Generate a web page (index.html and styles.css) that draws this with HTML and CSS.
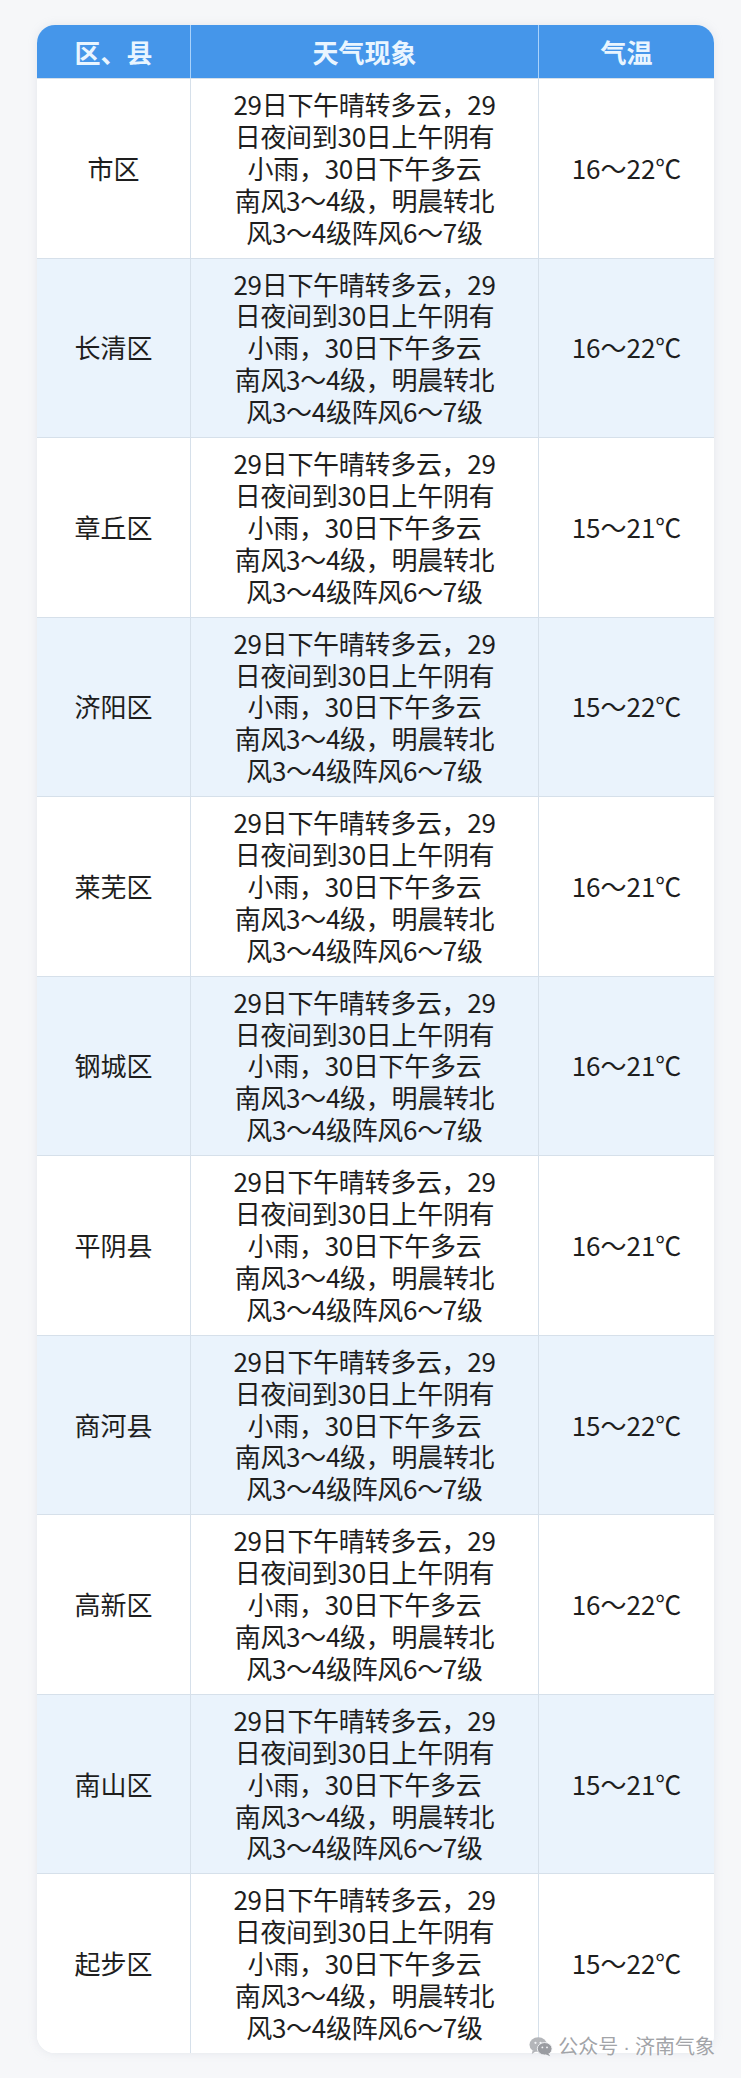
FILE: index.html
```html
<!DOCTYPE html>
<html lang="zh">
<head>
<meta charset="utf-8">
<link rel="stylesheet" href="styles.css">
</head>
<body>
<div class="page">
  <div class="card">
    <div class="row head">
      <div class="cell">区、县</div>
      <div class="cell">天气现象</div>
      <div class="cell">气温</div>
    </div>
    <div class="row">
      <div class="cell">市区</div>
      <div class="cell desc">29日下午晴转多云，29<br>日夜间到30日上午阴有<br>小雨，30日下午多云<br>南风3～4级，明晨转北<br>风3～4级阵风6～7级</div>
      <div class="cell">16～22℃</div>
    </div>
    <div class="row alt">
      <div class="cell">长清区</div>
      <div class="cell desc">29日下午晴转多云，29<br>日夜间到30日上午阴有<br>小雨，30日下午多云<br>南风3～4级，明晨转北<br>风3～4级阵风6～7级</div>
      <div class="cell">16～22℃</div>
    </div>
    <div class="row">
      <div class="cell">章丘区</div>
      <div class="cell desc">29日下午晴转多云，29<br>日夜间到30日上午阴有<br>小雨，30日下午多云<br>南风3～4级，明晨转北<br>风3～4级阵风6～7级</div>
      <div class="cell">15～21℃</div>
    </div>
    <div class="row alt">
      <div class="cell">济阳区</div>
      <div class="cell desc">29日下午晴转多云，29<br>日夜间到30日上午阴有<br>小雨，30日下午多云<br>南风3～4级，明晨转北<br>风3～4级阵风6～7级</div>
      <div class="cell">15～22℃</div>
    </div>
    <div class="row">
      <div class="cell">莱芜区</div>
      <div class="cell desc">29日下午晴转多云，29<br>日夜间到30日上午阴有<br>小雨，30日下午多云<br>南风3～4级，明晨转北<br>风3～4级阵风6～7级</div>
      <div class="cell">16～21℃</div>
    </div>
    <div class="row alt">
      <div class="cell">钢城区</div>
      <div class="cell desc">29日下午晴转多云，29<br>日夜间到30日上午阴有<br>小雨，30日下午多云<br>南风3～4级，明晨转北<br>风3～4级阵风6～7级</div>
      <div class="cell">16～21℃</div>
    </div>
    <div class="row">
      <div class="cell">平阴县</div>
      <div class="cell desc">29日下午晴转多云，29<br>日夜间到30日上午阴有<br>小雨，30日下午多云<br>南风3～4级，明晨转北<br>风3～4级阵风6～7级</div>
      <div class="cell">16～21℃</div>
    </div>
    <div class="row alt">
      <div class="cell">商河县</div>
      <div class="cell desc">29日下午晴转多云，29<br>日夜间到30日上午阴有<br>小雨，30日下午多云<br>南风3～4级，明晨转北<br>风3～4级阵风6～7级</div>
      <div class="cell">15～22℃</div>
    </div>
    <div class="row">
      <div class="cell">高新区</div>
      <div class="cell desc">29日下午晴转多云，29<br>日夜间到30日上午阴有<br>小雨，30日下午多云<br>南风3～4级，明晨转北<br>风3～4级阵风6～7级</div>
      <div class="cell">16～22℃</div>
    </div>
    <div class="row alt">
      <div class="cell">南山区</div>
      <div class="cell desc">29日下午晴转多云，29<br>日夜间到30日上午阴有<br>小雨，30日下午多云<br>南风3～4级，明晨转北<br>风3～4级阵风6～7级</div>
      <div class="cell">15～21℃</div>
    </div>
    <div class="row">
      <div class="cell">起步区</div>
      <div class="cell desc">29日下午晴转多云，29<br>日夜间到30日上午阴有<br>小雨，30日下午多云<br>南风3～4级，明晨转北<br>风3～4级阵风6～7级</div>
      <div class="cell">15～22℃</div>
    </div>
  </div>
  <div class="watermark">
    <svg class="wx" width="24" height="21" viewBox="0 0 26 22">
      <ellipse cx="10" cy="9" rx="9.5" ry="8" fill="#b4b6ba"/>
      <path d="M4 15 L3 19 L8 16 Z" fill="#b4b6ba"/>
      <ellipse cx="17" cy="13.5" rx="8" ry="6.8" fill="#9a9ca1" stroke="#f4f5f7" stroke-width="1"/>
      <path d="M21 18.5 L23 21.5 L18 19.5 Z" fill="#9a9ca1"/>
      <circle cx="7" cy="7" r="1.2" fill="#f4f5f7"/>
      <circle cx="12.5" cy="7" r="1.2" fill="#f4f5f7"/>
      <circle cx="14.5" cy="12" r="1" fill="#f4f5f7"/>
      <circle cx="19.5" cy="12" r="1" fill="#f4f5f7"/>
    </svg>
    <span>公众号<span class="dot">·</span>济南气象</span>
  </div>
</div>
</body>
</html>
```
FILE: styles.css
```css
html, body {
  margin: 0;
  padding: 0;
}
body {
  background: #f6f7f9;
  font-family: "Noto Sans CJK SC", "Noto Sans", sans-serif;
  color: #1e1e1e;
}
.page {
  position: relative;
  padding: 25px 27px 20px 37px;
}
.card {
  width: 677px;
  background: #ffffff;
  border-radius: 18px;
  overflow: hidden;
  box-shadow: 0 0 10px rgba(150, 160, 175, 0.18);
}
.row {
  display: grid;
  grid-template-columns: 153px 348px 176px;
  border-top: 1px solid #d6e0ea;
  background: #ffffff;
}
.row.alt {
  background: #eaf3fc;
}
.row.head {
  border-top: none;
  background: #4596ea;
  height: 53px;
}
.cell {
  display: flex;
  align-items: center;
  justify-content: center;
  text-align: center;
  font-size: 26px;
  line-height: 31.9px;
  padding: 9px 0 10px;
  border-left: 1px solid #d6e0ea;
}
.cell:first-child {
  border-left: none;
}
.head .cell {
  padding: 0;
  color: #e9f5ff;
  font-weight: 700;
  font-size: 26px;
  border-left: 1px solid #a9d2fb;
}
.head .cell:first-child {
  border-left: none;
}
.desc {
  letter-spacing: -0.3px;
}
.watermark {
  position: absolute;
  right: 26px;
  bottom: 12px;
  display: flex;
  align-items: center;
  gap: 5px;
  color: #a2a4a8;
  font-size: 20px;
  line-height: 28px;
  text-shadow: 0 0 3px #ffffff;
}
.dot {
  font-family: "Liberation Sans", sans-serif;
  padding: 0 5px;
}
.wx {
  display: block;
}
```
